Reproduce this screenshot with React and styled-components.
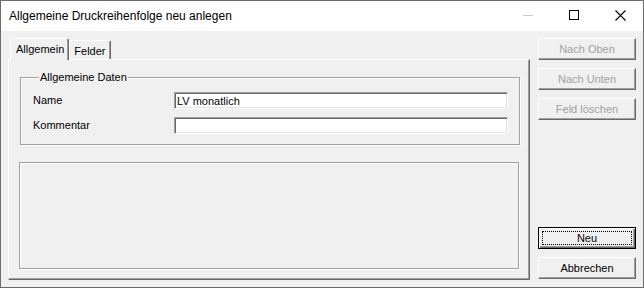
import styled, { createGlobalStyle } from 'styled-components';

const GlobalStyle = createGlobalStyle`
  html, body {
    margin: 0;
    padding: 0;
    background: #ffffff;
  }
  body {
    font-family: "Liberation Sans", Arial, sans-serif;
    font-size: 11px;
  }
`;

const raised = `
  border-style: solid;
  border-width: 1px;
  border-color: #ffffff #696969 #696969 #ffffff;
  box-shadow: inset -1px -1px 0 #a0a0a0;
`;

const etched = `
  border: 1px solid #a0a0a0;
  box-shadow: 1px 1px 0 #ffffff, inset 1px 1px 0 #ffffff;
`;

function Minimize() {
  return (
    <svg width="10" height="1" viewBox="0 0 10 1">
      <rect x="0" y="0" width="10" height="1" fill="#c8c8c8" />
    </svg>
  );
}

function Maximize() {
  return (
    <svg width="10" height="10" viewBox="0 0 10 10">
      <rect x="0.5" y="0.5" width="9" height="9" fill="none" stroke="#000" strokeWidth="1" />
    </svg>
  );
}

function Close() {
  return (
    <svg width="11" height="11" viewBox="0 0 11 11">
      <path d="M0.5 0.5 L10.5 10.5 M10.5 0.5 L0.5 10.5" stroke="#000" strokeWidth="1.1" />
    </svg>
  );
}

function App() {
  return (
    <>
      <GlobalStyle />
      <Window>
        <TitleBar>
          <Title>Allgemeine Druckreihenfolge neu anlegen</Title>
          <Controls>
            <CtrlButton><Minimize /></CtrlButton>
            <CtrlButton><Maximize /></CtrlButton>
            <CtrlButton><Close /></CtrlButton>
          </Controls>
        </TitleBar>
        <Client>
          <LeftColumn>
            <TabStrip>
              <Tab $active>Allgemein</Tab>
              <Tab>Felder</Tab>
            </TabStrip>
            <TabPanel>
              <Group>
                <Caption>Allgemeine Daten</Caption>
                <FormGrid>
                  <Label>Name</Label>
                  <TextBox defaultValue="LV monatlich" />
                  <Label>Kommentar</Label>
                  <TextBox defaultValue="" />
                </FormGrid>
              </Group>
              <EmptyFrame />
            </TabPanel>
          </LeftColumn>
          <RightColumn>
            <ButtonStack>
              <Button disabled>Nach Oben</Button>
              <Button disabled>Nach Unten</Button>
              <Button disabled>Feld löschen</Button>
            </ButtonStack>
            <ButtonStack>
              <DefaultButton>
                <Focus>Neu</Focus>
              </DefaultButton>
              <Button>Abbrechen</Button>
            </ButtonStack>
          </RightColumn>
        </Client>
      </Window>
    </>
  );
}

const Window = styled.div`
  width: 644px;
  height: 288px;
  box-sizing: border-box;
  border: 1px solid #6b6b6b;
  display: flex;
  flex-direction: column;
  background: #f0f0f0;
  overflow: hidden;
`;

const TitleBar = styled.div`
  height: 30px;
  flex: 0 0 auto;
  background: #ffffff;
  display: flex;
  align-items: center;
  justify-content: space-between;
`;

const Title = styled.div`
  padding-left: 8px;
  font-family: "Liberation Sans", Arial, sans-serif;
  font-size: 12px;
  color: #000000;
  margin-top: -1px;
`;

const Controls = styled.div`
  display: flex;
  height: 100%;
`;

const CtrlButton = styled.div`
  width: 46px;
  height: 100%;
  display: flex;
  align-items: center;
  justify-content: center;
  margin-top: -1px;
`;

const Client = styled.div`
  flex: 1 1 auto;
  display: flex;
  gap: 8px;
  padding: 7px 7px 7px 7px;
`;

const LeftColumn = styled.div`
  width: 522px;
  display: flex;
  flex-direction: column;
`;

const TabStrip = styled.div`
  height: 21px;
  display: flex;
  align-items: flex-end;
  padding-left: 2px;
`;

const Tab = styled.div`
  position: relative;
  z-index: ${(p) => (p.$active ? 1 : 0)};
  box-sizing: border-box;
  height: ${(p) => (p.$active ? '22px' : '19px')};
  margin-bottom: ${(p) => (p.$active ? '-1px' : '0')};
  padding: ${(p) => (p.$active ? '3px 4px 0 5px' : '3px 4px 0 4px')};
  background: #f0f0f0;
  border-style: solid;
  border-width: 1px 1px 0 1px;
  border-color: #ffffff #696969 #ffffff #ffffff;
  box-shadow: inset -1px 0 0 #a0a0a0;
  border-radius: 2px 2px 0 0;
  color: #000000;
  line-height: 14px;
`;

const TabPanel = styled.div`
  flex: 1 1 auto;
  box-sizing: border-box;
  ${raised}
  display: flex;
  flex-direction: column;
  padding: 17px 9px 10px 11px;
`;

const Group = styled.div`
  ${etched}
  padding: 0 9px 10px 12px;
`;

const Caption = styled.div`
  width: fit-content;
  margin: -7px 0 0 6px;
  padding: 0 1px;
  line-height: 13px;
  background: #f0f0f0;
  color: #000000;
`;

const FormGrid = styled.div`
  display: grid;
  grid-template-columns: 141px 334px;
  row-gap: 8px;
  align-items: center;
  padding-top: 8px;
`;

const Label = styled.div`
  color: #000000;
  line-height: 13px;
`;

const TextBox = styled.input`
  box-sizing: border-box;
  width: 334px;
  height: 17px;
  margin: 0;
  padding: 0 2px;
  font-family: "Liberation Sans", Arial, sans-serif;
  font-size: 11px;
  color: #000000;
  background: #ffffff;
  border-style: solid;
  border-width: 1px;
  border-color: #a0a0a0 #ffffff #ffffff #a0a0a0;
  box-shadow: inset 1px 1px 0 #696969, inset -1px -1px 0 #e3e3e3;
  outline: none;
`;

const EmptyFrame = styled.div`
  ${etched}
  flex: 1 1 auto;
  margin: 17px 1px 0 -1px;
`;

const RightColumn = styled.div`
  width: 98px;
  display: flex;
  flex-direction: column;
  justify-content: space-between;
  padding-bottom: 1px;
`;

const ButtonStack = styled.div`
  display: flex;
  flex-direction: column;
  gap: 8px;
`;

const Button = styled.button`
  box-sizing: border-box;
  width: 98px;
  height: 22px;
  margin: 0;
  padding: 0;
  ${raised}
  background: #f0f0f0;
  font-family: "Liberation Sans", Arial, sans-serif;
  font-size: 11px;
  color: #000000;
  &:disabled {
    color: #a0a0a0;
  }
`;

const DefaultButton = styled(Button)`
  border: 1px solid #000000;
  box-shadow: inset 1px 1px 0 #ffffff, inset -1px -1px 0 #696969, inset -2px -2px 0 #a0a0a0;
  display: flex;
  align-items: stretch;
  justify-content: stretch;
  padding: 3px;
`;

const Focus = styled.span`
  flex: 1;
  display: flex;
  align-items: center;
  justify-content: center;
  border: 1px dotted #000000;
`;

export default App;
